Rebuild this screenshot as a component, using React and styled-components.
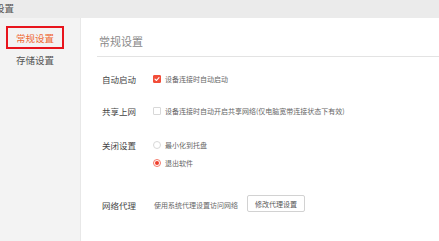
import React from "react";
import styled, { createGlobalStyle } from "styled-components";

const Global = createGlobalStyle`
  html, body { margin: 0; padding: 0; background: #fff; }
  body { font-family: "Noto Sans CJK SC", "Noto Sans", sans-serif; overflow: hidden; }
  * { box-sizing: border-box; }
`;

const Window = styled.div`
  width: 439px;
  height: 241px;
  display: flex;
  flex-direction: column;
  background: #fff;
  overflow: hidden;
`;

const TitleBar = styled.div`
  height: 18px;
  flex: none;
  background: #ebebeb;
  display: flex;
  align-items: center;
  padding-left: 0;
`;

const TitleText = styled.span`
  margin-left: -5px;
  font-size: 9.5px;
  line-height: 12px;
  color: #555;
  margin-top: -2px;
`;

const Body = styled.div`
  flex: 1;
  display: flex;
  min-height: 0;
`;

const Sidebar = styled.nav`
  width: 81px;
  flex: none;
  background: #f3f3f3;
  border-right: 1px solid #e8e8e8;
  padding: 8px 0 0 6px;
  display: flex;
  flex-direction: column;
`;

const NavItem = styled.div`
  width: 58px;
  height: ${(p) => (p.$active ? 23 : 20)}px;
  display: flex;
  align-items: center;
  justify-content: center;
  font-size: 9.5px;
  color: ${(p) => (p.$active ? "#ef6a35" : "#555")};
  border: ${(p) => (p.$active ? "2px solid #e8141c" : "2px solid transparent")};
  padding-top: ${(p) => (p.$active ? 0 : 1)}px;
`;

const Main = styled.main`
  flex: 1;
  padding-left: 16px;
  display: flex;
  flex-direction: column;
`;

const Header = styled.div`
  padding: 16px 0 8px 2px;
  border-bottom: 1px solid #e3e3e3;
  font-size: 11px;
  line-height: 14px;
  color: #8a8a8a;
`;

const Row = styled.div`
  display: flex;
  align-items: flex-start;
  padding-left: 5px;
  margin-top: ${(p) => p.$gap}px;
`;

const Label = styled.div`
  width: 51px;
  flex: none;
  font-size: 8.5px;
  line-height: 14px;
  color: #444;
`;

const Options = styled.div`
  display: flex;
  flex-direction: column;
  gap: 4px;
`;

const Option = styled.label`
  display: flex;
  align-items: center;
  height: 14px;
  font-size: 7px;
  color: #666;
  gap: 4px;
`;

const Box = styled.span`
  width: 8px;
  height: 8px;
  flex: none;
  border-radius: 1px;
  display: flex;
  align-items: center;
  justify-content: center;
  background: ${(p) => (p.$checked ? "#f24d39" : "#fff")};
  border: 1px solid ${(p) => (p.$checked ? "#f24d39" : "#d8d8d8")};
`;

const Radio = styled.span`
  width: 8px;
  height: 8px;
  flex: none;
  border-radius: 50%;
  border: 1px solid ${(p) => (p.$checked ? "#f47a6a" : "#d8d8d8")};
  background: #fff;
  display: flex;
  align-items: center;
  justify-content: center;
  &::after {
    content: "";
    width: 4px;
    height: 4px;
    border-radius: 50%;
    background: ${(p) => (p.$checked ? "#f03e2c" : "transparent")};
  }
`;

const ProxyRow = styled(Row)`
  align-items: center;
`;

const ProxyLabel = styled(Label)`
  margin-top: 2px;
`;

const ProxyText = styled.span`
  font-size: 7px;
  color: #666;
  margin-left: 1px;
  margin-top: 3px;
`;

const Button = styled.button`
  margin-left: 9px;
  width: 58px;
  height: 17px;
  border: 1px solid #d2d2d2;
  border-radius: 2px;
  background: #fff;
  font-family: inherit;
  font-size: 7px;
  color: #555;
  padding: 0;
  display: flex;
  align-items: center;
  justify-content: center;
`;

function Check({ checked }) {
  return (
    <Box $checked={checked}>
      {checked && (
        <svg width="6" height="6" viewBox="0 0 6 6">
          <path d="M1 3.1 L2.5 4.5 L5 1.6" fill="none" stroke="#fff" strokeWidth="1.1" strokeLinecap="round" strokeLinejoin="round" />
        </svg>
      )}
    </Box>
  );
}

export default function App() {
  return (
    <Window>
      <Global />
      <TitleBar>
        <TitleText>设置</TitleText>
      </TitleBar>
      <Body>
        <Sidebar>
          <NavItem $active>常规设置</NavItem>
          <NavItem>存储设置</NavItem>
        </Sidebar>
        <Main>
          <Header>常规设置</Header>
          <Row $gap={15}>
            <Label>自动启动</Label>
            <Option>
              <Check checked />
              设备连接时自动启动
            </Option>
          </Row>
          <Row $gap={18}>
            <Label>共享上网</Label>
            <Option>
              <Check />
              设备连接时自动开启共享网络(仅电脑宽带连接状态下有效)
            </Option>
          </Row>
          <Row $gap={20}>
            <Label>关闭设置</Label>
            <Options>
              <Option>
                <Radio />
                最小化到托盘
              </Option>
              <Option>
                <Radio $checked />
                退出软件
              </Option>
            </Options>
          </Row>
          <ProxyRow $gap={25}>
            <ProxyLabel>网络代理</ProxyLabel>
            <ProxyText>使用系统代理设置访问网络</ProxyText>
            <Button>修改代理设置</Button>
          </ProxyRow>
        </Main>
      </Body>
    </Window>
  );
}
